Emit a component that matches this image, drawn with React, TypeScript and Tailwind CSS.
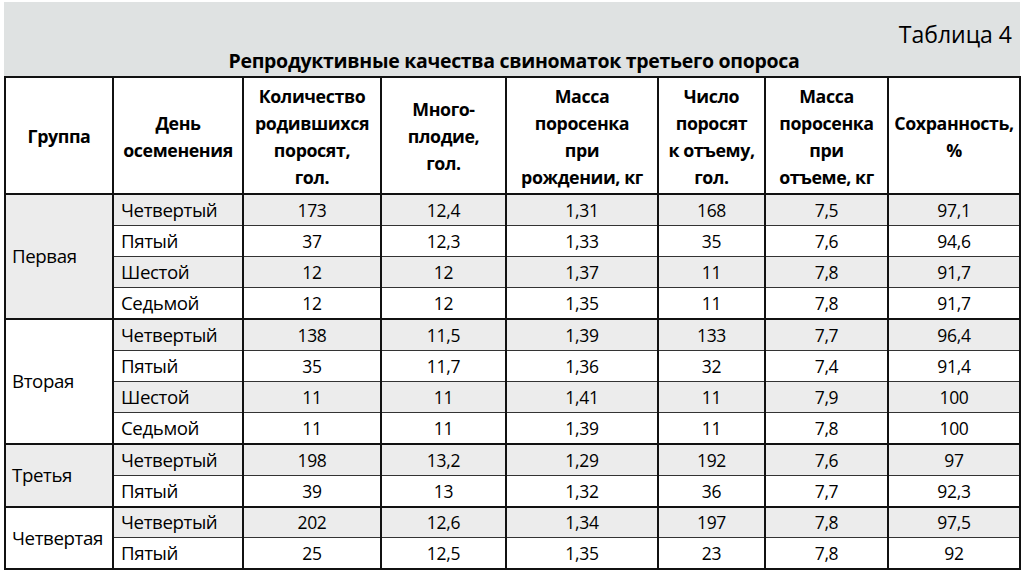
import React from "react";

type Row = [string, string, string, string, string, string, string];

const groups: { name: string; rows: Row[] }[] = [
  {
    name: "Первая",
    rows: [
      ["Четвертый", "173", "12,4", "1,31", "168", "7,5", "97,1"],
      ["Пятый", "37", "12,3", "1,33", "35", "7,6", "94,6"],
      ["Шестой", "12", "12", "1,37", "11", "7,8", "91,7"],
      ["Седьмой", "12", "12", "1,35", "11", "7,8", "91,7"],
    ],
  },
  {
    name: "Вторая",
    rows: [
      ["Четвертый", "138", "11,5", "1,39", "133", "7,7", "96,4"],
      ["Пятый", "35", "11,7", "1,36", "32", "7,4", "91,4"],
      ["Шестой", "11", "11", "1,41", "11", "7,9", "100"],
      ["Седьмой", "11", "11", "1,39", "11", "7,8", "100"],
    ],
  },
  {
    name: "Третья",
    rows: [
      ["Четвертый", "198", "13,2", "1,29", "192", "7,6", "97"],
      ["Пятый", "39", "13", "1,32", "36", "7,7", "92,3"],
    ],
  },
  {
    name: "Четвертая",
    rows: [
      ["Четвертый", "202", "12,6", "1,34", "197", "7,8", "97,5"],
      ["Пятый", "25", "12,5", "1,35", "23", "7,8", "92"],
    ],
  },
];

const widths = [108, 130, 138, 125, 152, 107, 123, 132];

const headers: string[][] = [
  ["Группа"],
  ["День", "осеменения"],
  ["Количество", "родившихся", "поросят,", "гол."],
  ["Много-", "плодие,", "гол."],
  ["Масса", "поросенка", "при", "рождении, кг"],
  ["Число", "поросят", "к отъему,", "гол."],
  ["Масса", "поросенка", "при", "отъеме, кг"],
  ["Сохранность,", "%"],
];

export default function App() {
  return (
    <div
      className="w-[1024px] h-[570px] bg-white pt-[2px] px-[4px] text-black"
      style={{ fontFamily: "'Open Sans', 'Noto Sans', sans-serif" }}
    >
      <div className="bg-[#dfe2e2] h-[74px] flex flex-col">
        <div className="h-[46px] flex items-end justify-end pr-[8px] pb-[1px] text-[23px] leading-[26px] tracking-[0px]">
          Таблица 4
        </div>
        <div className="flex-1 flex items-center justify-center pl-[4px] pb-[2px] font-bold text-[19.5px] leading-[22px] tracking-[-0.3px]">
          Репродуктивные качества свиноматок третьего опороса
        </div>
      </div>
      <table className="border-collapse table-fixed border-2 border-[#111]" style={{ width: 1016 }}>
        <colgroup>
          {widths.map((w, i) => (
            <col key={i} style={{ width: w }} />
          ))}
        </colgroup>
        <thead>
          <tr className="h-[117px]">
            {headers.map((lines, i) => (
              <th
                key={i}
                className="border-2 border-[#111] bg-white font-bold text-[17.8px] leading-[27px] tracking-[-0.4px] text-center align-middle px-0 pt-[2px]"
              >
                {lines.map((l, j) => (
                  <div key={j} className="whitespace-nowrap">
                    {l}
                  </div>
                ))}
              </th>
            ))}
          </tr>
        </thead>
        <tbody>
          {groups.map((g, gi) =>
            g.rows.map((r, ri) => {
              const shaded = ri % 2 === 0;
              const last = ri === g.rows.length - 1;
              return (
                <tr key={gi + "-" + ri} className="h-[31.25px]">
                  {ri === 0 && (
                    <td
                      rowSpan={g.rows.length}
                      className={
                        "border-2 border-[#111] text-left pl-[6px] text-[18.7px] tracking-[-0.4px] align-middle " +
                        (gi % 2 === 0 ? "bg-[#ececec]" : "bg-white")
                      }
                    >
                      {g.name}
                    </td>
                  )}
                  {r.map((c, ci) => (
                    <td
                      key={ci}
                      className={
                        "border-x-2 border-x-[#111] leading-[20px] p-0 " +
                        (last ? "border-b-2 border-b-[#111] " : "border-b border-b-[#333] ") +
                        (ci === 0
                          ? "text-left pl-[7px] text-[18.7px] tracking-[-0.4px] "
                          : "text-center text-[17.5px] tracking-[-0.3px] ") +
                        (shaded ? "bg-[#ececec]" : "bg-white")
                      }
                    >
                      {c}
                    </td>
                  ))}
                </tr>
              );
            })
          )}
        </tbody>
      </table>
    </div>
  );
}
